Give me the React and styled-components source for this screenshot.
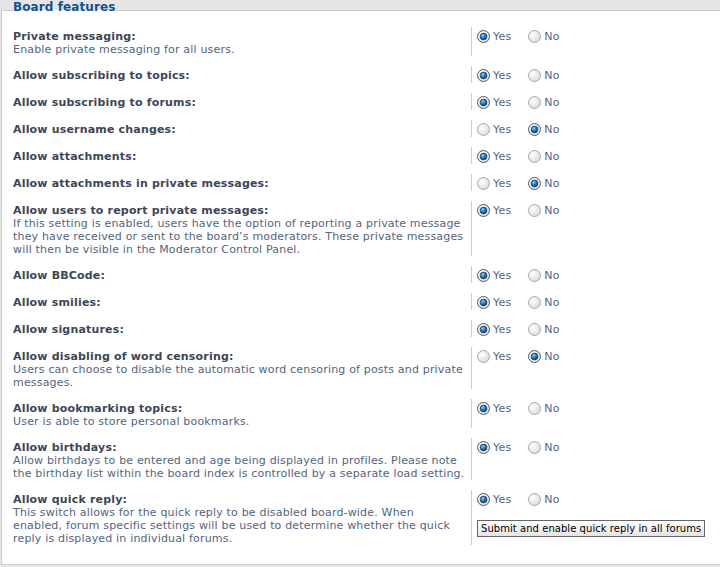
import React from 'react';
import styled, { createGlobalStyle } from 'styled-components';

const GlobalStyle = createGlobalStyle`
	html, body {
		margin: 0;
		padding: 0;
		background: #e6e6e6;
		font-family: 'DejaVu Sans', Verdana, sans-serif;
		overflow: hidden;
	}
`;

const Page = styled.div`
	width: 720px;
	height: 567px;
	overflow: hidden;
	background: #e6e6e6;
`;

const Fieldset = styled.fieldset`
	margin: 0 -30px 0 1px;
	padding: 4px 0 9px 11px;
	border: 1px solid #cccccc;
	background: #ffffff;
	min-width: 0;
`;

const Legend = styled.legend`
	padding: 0 0 6px 0;
	margin-left: 0;
	font-size: 12px;
	line-height: 15px;
	font-weight: bold;
	letter-spacing: 0.1px;
	color: #115098;
`;

const Row = styled.div`
	display: grid;
	grid-template-columns: 458px 1fr;
	margin-top: ${({ first }) => (first ? '2px' : '0')};
	margin-bottom: 10px;
	font-size: 11px;
	line-height: 13px;
	letter-spacing: 0.18px;
`;

const Term = styled.div`
	padding: 3px 6px 0 0;
`;

const Title = styled.div`
	font-weight: bold;
	color: #3d4657;
`;

const Explain = styled.div`
	color: #536482;
`;

const Definition = styled.div`
	min-height: 17px;
	border-left: 1px solid #cccccc;
	padding-left: 5px;
`;

const Choices = styled.div`
	display: flex;
	align-items: center;
	padding-top: 3px;
`;

const Choice = styled.label`
	display: inline-flex;
	align-items: center;
	gap: 3px;
	margin-right: 17px;
	color: #536482;
	line-height: 13px;
`;

const Button = styled.button`
	display: block;
	margin-top: 14px;
	height: 17px;
	padding: 0 3px;
	border: 1px solid #666666;
	background: linear-gradient(#ffffff, #e4e4e4);
	font-family: 'DejaVu Sans', Verdana, sans-serif;
	font-size: 10px;
	line-height: 14px;
	letter-spacing: 0.05px;
	color: #000000;
	white-space: nowrap;
`;

const Radio = ({ checked }) => (
	<svg width='13' height='13' viewBox='0 0 13 13'>
		<defs>
			<radialGradient id='rbg' cx='0.35' cy='0.35' r='0.8'>
				<stop offset='0' stopColor='#ffffff' />
				<stop offset='1' stopColor='#d6d6d6' />
			</radialGradient>
			<radialGradient id='rdot' cx='0.4' cy='0.35' r='0.7'>
				<stop offset='0' stopColor='#8fd3ff' />
				<stop offset='0.5' stopColor='#1b79c4' />
				<stop offset='1' stopColor='#0a3a66' />
			</radialGradient>
		</defs>
		<circle cx='6.5' cy='6.5' r='6' fill='url(#rbg)' stroke={checked ? '#5a5a5a' : '#a8a8a8'} strokeWidth='1' />
		{checked && <circle cx='6.5' cy='6.5' r='3.4' fill='url(#rdot)' stroke='#12304d' strokeWidth='0.6' />}
	</svg>
);

const settings = [
	{ title: 'Private messaging:', explain: 'Enable private messaging for all users.', yes: true },
	{ title: 'Allow subscribing to topics:', yes: true },
	{ title: 'Allow subscribing to forums:', yes: true },
	{ title: 'Allow username changes:', yes: false },
	{ title: 'Allow attachments:', yes: true },
	{ title: 'Allow attachments in private messages:', yes: false },
	{
		title: 'Allow users to report private messages:',
		explain:
			'If this setting is enabled, users have the option of reporting a private message they have received or sent to the board\u2019s moderators. These private messages will then be visible in the Moderator Control Panel.',
		yes: true,
	},
	{ title: 'Allow BBCode:', yes: true },
	{ title: 'Allow smilies:', yes: true },
	{ title: 'Allow signatures:', yes: true },
	{
		title: 'Allow disabling of word censoring:',
		explain: 'Users can choose to disable the automatic word censoring of posts and private messages.',
		yes: false,
	},
	{ title: 'Allow bookmarking topics:', explain: 'User is able to store personal bookmarks.', yes: true },
	{
		title: 'Allow birthdays:',
		explain:
			'Allow birthdays to be entered and age being displayed in profiles. Please note the birthday list within the board index is controlled by a separate load setting.',
		yes: true,
	},
	{
		title: 'Allow quick reply:',
		explain:
			'This switch allows for the quick reply to be disabled board-wide. When enabled, forum specific settings will be used to determine whether the quick reply is displayed in individual forums.',
		yes: true,
		button: 'Submit and enable quick reply in all forums',
	},
];

const App = () => (
	<Page>
		<GlobalStyle />
		<Fieldset>
			<Legend>Board features</Legend>
			{settings.map((item, index) => (
				<Row key={index} first={index === 0}>
					<Term>
						<Title>{item.title}</Title>
						{item.explain && <Explain>{item.explain}</Explain>}
					</Term>
					<Definition>
						<Choices>
							<Choice>
								<Radio checked={item.yes} /> Yes
							</Choice>
							<Choice>
								<Radio checked={!item.yes} /> No
							</Choice>
						</Choices>
						{item.button && <Button>{item.button}</Button>}
					</Definition>
				</Row>
			))}
		</Fieldset>
	</Page>
);

export default App;
